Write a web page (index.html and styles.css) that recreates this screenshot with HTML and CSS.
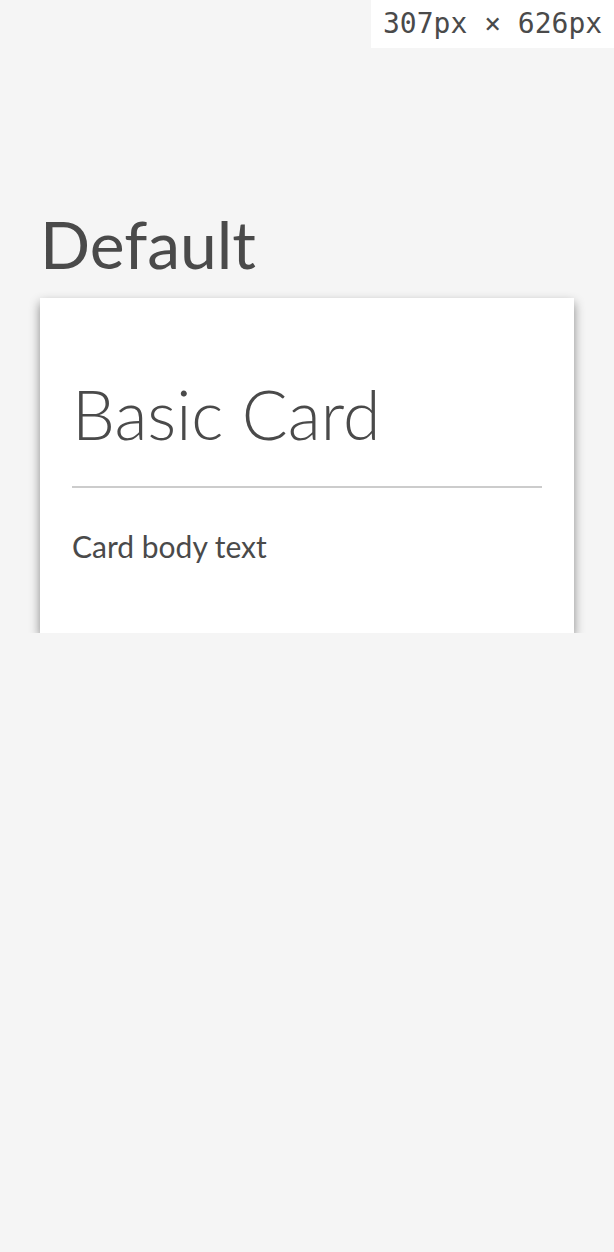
FILE: index.html
```html
<!DOCTYPE html>
<html>
<head>
<meta charset="utf-8">
<link rel="stylesheet" href="styles.css">
</head>
<body>
<div class="size-badge">307px × 626px</div>
<main class="page">
  <h1 class="section-title">Default</h1>
  <section class="card">
    <h2 class="card-title">Basic Card</h2>
    <hr class="card-divider">
    <p class="card-body">Card body text</p>
  </section>
</main>
</body>
</html>
```
FILE: styles.css
```css
html, body {
  margin: 0;
  padding: 0;
  background: #f5f5f5;
}
body {
  font-family: Lato, "Noto Sans", sans-serif;
  color: #4a4a4a;
}
.size-badge {
  position: absolute;
  top: 0;
  right: 0;
  width: 243px;
  height: 48px;
  box-sizing: border-box;
  background: #ffffff;
  font-family: "DejaVu Sans Mono", monospace;
  font-size: 28px;
  line-height: 48px;
  color: #4a4a4a;
  padding-left: 12px;
}
.page {
  padding: 202px 40px 0;
}
.section-title {
  margin: 0;
  font-size: 66px;
  font-weight: 400;
  line-height: 84px;
}
.card {
  margin-top: 12px;
  background: #fff;
  padding: 74px 32px 67px;
  box-shadow: 0 5px 10px rgba(0,0,0,0.45);
}
.card-title {
  margin: 0;
  font-size: 68px;
  font-weight: 300;
  line-height: 84px;
}
.card-divider {
  margin: 30px 0 0;
  border: 0;
  height: 2px;
  background: #cccccc;
}
.card-body {
  margin: 38px 0 0;
  font-size: 30px;
  line-height: 40px;
}
```
